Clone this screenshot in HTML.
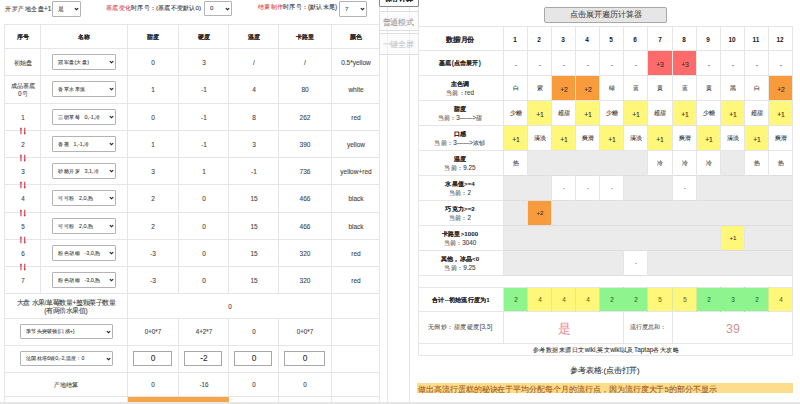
<!DOCTYPE html>
<html><head><meta charset="utf-8"><style>
html,body{margin:0;padding:0;}
body{width:800px;height:404px;overflow:hidden;position:relative;background:#fff;font-family:"Liberation Sans",sans-serif;}
.a{position:absolute;box-sizing:content-box;}
.t{position:absolute;text-align:center;white-space:nowrap;-webkit-text-stroke-width:0.35px;transform:scale(0.25);transform-origin:50% 50%;}
.tl{position:absolute;white-space:nowrap;-webkit-text-stroke-width:0.35px;transform:scale(0.25);transform-origin:0 50%;}
.sel{border:1px solid #b4b4b4;background:#fff;border-radius:1px;}
.inp{border:1px solid #a8a8a8;background:#fff;}
.mbtn{border:1px solid #dedede;background:rgba(250,250,250,0.6);}
</style></head><body>
<div class="tl" style="left:4.60px;top:-8.44px;height:33.28px;line-height:33.28px;font-size:25.6px;color:#333;">开罗产地全盘+1</div>
<div class="a sel" style="left:52px;top:1px;width:27px;height:14px;"></div>
<div class="tl" style="left:57.50px;top:-7.10px;height:31.20px;line-height:31.20px;font-size:24.0px;color:#404040;">是</div>
<svg class="a" style="left:73.7px;top:7.0px" width="5" height="4" viewBox="0 0 5 4"><polyline points="0.8,1.1 2.5,2.7 4.2,1.1" fill="none" stroke="#222" stroke-width="1.1"/></svg>
<div class="tl" style="left:105.60px;top:-8.25px;height:32.50px;line-height:32.50px;font-size:25.0px;color:#333;"><span style="color:#d9474f">基底变化</span>时序号：(基底不变默认0)</div>
<div class="a sel" style="left:204px;top:1px;width:26px;height:13px;"></div>
<div class="tl" style="left:210.00px;top:-7.60px;height:31.20px;line-height:31.20px;font-size:24.0px;color:#404040;">0</div>
<svg class="a" style="left:224.7px;top:6.5px" width="5" height="4" viewBox="0 0 5 4"><polyline points="0.8,1.1 2.5,2.7 4.2,1.1" fill="none" stroke="#222" stroke-width="1.1"/></svg>
<div class="tl" style="left:257.80px;top:-9.61px;height:33.02px;line-height:33.02px;font-size:25.4px;color:#333;"><span style="color:#d9474f">结束制作</span>时序号：(默认末尾)</div>
<div class="a sel" style="left:339px;top:1px;width:26px;height:14px;"></div>
<div class="tl" style="left:345.00px;top:-7.10px;height:31.20px;line-height:31.20px;font-size:24.0px;color:#404040;">7</div>
<svg class="a" style="left:359.7px;top:7.0px" width="5" height="4" viewBox="0 0 5 4"><polyline points="0.8,1.1 2.5,2.7 4.2,1.1" fill="none" stroke="#222" stroke-width="1.1"/></svg>
<div class="a" style="left:4px;top:24px;width:376px;height:1px;background:#e6e6e6;"></div>
<div class="a" style="left:4px;top:48px;width:376px;height:1px;background:#e6e6e6;"></div>
<div class="a" style="left:4px;top:75px;width:376px;height:1px;background:#e6e6e6;"></div>
<div class="a" style="left:4px;top:103px;width:376px;height:1px;background:#e6e6e6;"></div>
<div class="a" style="left:4px;top:130px;width:376px;height:1px;background:#e6e6e6;"></div>
<div class="a" style="left:4px;top:157px;width:376px;height:1px;background:#e6e6e6;"></div>
<div class="a" style="left:4px;top:184px;width:376px;height:1px;background:#e6e6e6;"></div>
<div class="a" style="left:4px;top:212px;width:376px;height:1px;background:#e6e6e6;"></div>
<div class="a" style="left:4px;top:239px;width:376px;height:1px;background:#e6e6e6;"></div>
<div class="a" style="left:4px;top:266px;width:376px;height:1px;background:#e6e6e6;"></div>
<div class="a" style="left:4px;top:293px;width:376px;height:1px;background:#e6e6e6;"></div>
<div class="a" style="left:4px;top:318px;width:376px;height:1px;background:#e6e6e6;"></div>
<div class="a" style="left:4px;top:345px;width:376px;height:1px;background:#e6e6e6;"></div>
<div class="a" style="left:4px;top:372px;width:376px;height:1px;background:#e6e6e6;"></div>
<div class="a" style="left:4px;top:396px;width:376px;height:1px;background:#e6e6e6;"></div>
<div class="a" style="left:4px;top:24px;width:1px;height:270px;background:#e6e6e6;"></div>
<div class="a" style="left:40px;top:24px;width:1px;height:270px;background:#e6e6e6;"></div>
<div class="a" style="left:127px;top:24px;width:1px;height:270px;background:#e6e6e6;"></div>
<div class="a" style="left:178px;top:24px;width:1px;height:270px;background:#e6e6e6;"></div>
<div class="a" style="left:228px;top:24px;width:1px;height:270px;background:#e6e6e6;"></div>
<div class="a" style="left:278px;top:24px;width:1px;height:270px;background:#e6e6e6;"></div>
<div class="a" style="left:331px;top:24px;width:1px;height:270px;background:#e6e6e6;"></div>
<div class="a" style="left:379px;top:24px;width:1px;height:270px;background:#e6e6e6;"></div>
<div class="a" style="left:4px;top:293px;width:1px;height:112px;background:#e6e6e6;"></div>
<div class="a" style="left:379px;top:293px;width:1px;height:112px;background:#e6e6e6;"></div>
<div class="a" style="left:127px;top:293px;width:1px;height:112px;background:#e6e6e6;"></div>
<div class="a" style="left:331px;top:293px;width:1px;height:112px;background:#e6e6e6;"></div>
<div class="a" style="left:178px;top:318px;width:1px;height:87px;background:#e6e6e6;"></div>
<div class="a" style="left:228px;top:318px;width:1px;height:87px;background:#e6e6e6;"></div>
<div class="a" style="left:278px;top:318px;width:1px;height:87px;background:#e6e6e6;"></div>
<div class="t" style="left:-577.50px;top:19.92px;width:1200px;height:32.76px;line-height:32.76px;font-size:25.2px;color:#222;font-weight:bold;-webkit-text-stroke-width:0.15px;">序号</div>
<div class="t" style="left:-516.00px;top:19.92px;width:1200px;height:32.76px;line-height:32.76px;font-size:25.2px;color:#222;font-weight:bold;-webkit-text-stroke-width:0.15px;">名称</div>
<div class="t" style="left:-447.00px;top:19.92px;width:1200px;height:32.76px;line-height:32.76px;font-size:25.2px;color:#222;font-weight:bold;-webkit-text-stroke-width:0.15px;">甜度</div>
<div class="t" style="left:-396.50px;top:19.92px;width:1200px;height:32.76px;line-height:32.76px;font-size:25.2px;color:#222;font-weight:bold;-webkit-text-stroke-width:0.15px;">硬度</div>
<div class="t" style="left:-346.50px;top:19.92px;width:1200px;height:32.76px;line-height:32.76px;font-size:25.2px;color:#222;font-weight:bold;-webkit-text-stroke-width:0.15px;">温度</div>
<div class="t" style="left:-295.00px;top:19.92px;width:1200px;height:32.76px;line-height:32.76px;font-size:25.2px;color:#222;font-weight:bold;-webkit-text-stroke-width:0.15px;">卡路里</div>
<div class="t" style="left:-244.50px;top:19.92px;width:1200px;height:32.76px;line-height:32.76px;font-size:25.2px;color:#222;font-weight:bold;-webkit-text-stroke-width:0.15px;">颜色</div>
<div class="t" style="left:-577.50px;top:45.92px;width:1200px;height:32.76px;line-height:32.76px;font-size:25.2px;color:#444;">初始盘</div>
<div class="a sel" style="left:52px;top:54px;width:62px;height:14px;"></div>
<div class="tl" style="left:58.00px;top:48.26px;height:28.08px;line-height:28.08px;font-size:21.6px;color:#404040;">冠军盘(大盘)</div>
<svg class="a" style="left:108.7px;top:60.0px" width="5" height="4" viewBox="0 0 5 4"><polyline points="0.8,1.1 2.5,2.7 4.2,1.1" fill="none" stroke="#222" stroke-width="1.1"/></svg>
<div class="t" style="left:-447.00px;top:45.50px;width:1200px;height:33.80px;line-height:33.80px;font-size:26.0px;color:#444;">0</div>
<div class="t" style="left:-396.50px;top:45.50px;width:1200px;height:33.80px;line-height:33.80px;font-size:26.0px;color:#444;">3</div>
<div class="t" style="left:-346.50px;top:45.50px;width:1200px;height:33.80px;line-height:33.80px;font-size:26.0px;color:#444;">/</div>
<div class="t" style="left:-295.00px;top:45.50px;width:1200px;height:33.80px;line-height:33.80px;font-size:26.0px;color:#444;">/</div>
<div class="t" style="left:-244.50px;top:45.50px;width:1200px;height:33.80px;line-height:33.80px;font-size:26.0px;color:#444;">0.5*yellow</div>
<div class="t" style="left:-577.50px;top:68.52px;width:1200px;height:32.76px;line-height:32.76px;font-size:25.2px;color:#444;">成品基底</div>
<div class="t" style="left:-577.50px;top:76.72px;width:1200px;height:32.76px;line-height:32.76px;font-size:25.2px;color:#444;">0号</div>
<div class="a sel" style="left:52px;top:81px;width:62px;height:14px;"></div>
<div class="tl" style="left:58.00px;top:75.26px;height:28.08px;line-height:28.08px;font-size:21.6px;color:#404040;">香草水果派</div>
<svg class="a" style="left:108.7px;top:87.0px" width="5" height="4" viewBox="0 0 5 4"><polyline points="0.8,1.1 2.5,2.7 4.2,1.1" fill="none" stroke="#222" stroke-width="1.1"/></svg>
<div class="t" style="left:-447.00px;top:73.00px;width:1200px;height:33.80px;line-height:33.80px;font-size:26.0px;color:#444;">1</div>
<div class="t" style="left:-396.50px;top:73.00px;width:1200px;height:33.80px;line-height:33.80px;font-size:26.0px;color:#444;">-1</div>
<div class="t" style="left:-346.50px;top:73.00px;width:1200px;height:33.80px;line-height:33.80px;font-size:26.0px;color:#444;">4</div>
<div class="t" style="left:-295.00px;top:73.00px;width:1200px;height:33.80px;line-height:33.80px;font-size:26.0px;color:#444;">80</div>
<div class="t" style="left:-244.50px;top:73.00px;width:1200px;height:33.80px;line-height:33.80px;font-size:26.0px;color:#444;">white</div>
<div class="t" style="left:-577.50px;top:100.92px;width:1200px;height:32.76px;line-height:32.76px;font-size:25.2px;color:#444;">1</div>
<div class="a sel" style="left:52px;top:109px;width:62px;height:14px;"></div>
<div class="tl" style="left:58.00px;top:103.26px;height:28.08px;line-height:28.08px;font-size:21.6px;color:#404040;">三明草莓&nbsp;&nbsp;&nbsp;0,-1,冷</div>
<svg class="a" style="left:108.7px;top:115.0px" width="5" height="4" viewBox="0 0 5 4"><polyline points="0.8,1.1 2.5,2.7 4.2,1.1" fill="none" stroke="#222" stroke-width="1.1"/></svg>
<div class="t" style="left:-447.00px;top:100.50px;width:1200px;height:33.80px;line-height:33.80px;font-size:26.0px;color:#444;">0</div>
<div class="t" style="left:-396.50px;top:100.50px;width:1200px;height:33.80px;line-height:33.80px;font-size:26.0px;color:#444;">-1</div>
<div class="t" style="left:-346.50px;top:100.50px;width:1200px;height:33.80px;line-height:33.80px;font-size:26.0px;color:#444;">8</div>
<div class="t" style="left:-295.00px;top:100.50px;width:1200px;height:33.80px;line-height:33.80px;font-size:26.0px;color:#444;">262</div>
<div class="t" style="left:-244.50px;top:100.50px;width:1200px;height:33.80px;line-height:33.80px;font-size:26.0px;color:#444;">red</div>
<svg class="a" style="left:19px;top:126.5px" width="8" height="8" viewBox="0 0 8 8"><path d="M1.9 0.3 L0.6 2.2 L1.4 2.2 L1.4 7.3 L2.5 7.3 L2.5 2.2 L3.3 2.2 Z M5.7 7.7 L4.4 5.8 L5.2 5.8 L5.2 0.7 L6.3 0.7 L6.3 5.8 L7.1 5.8 Z" fill="#c8384a"/></svg>
<div class="t" style="left:-577.50px;top:127.92px;width:1200px;height:32.76px;line-height:32.76px;font-size:25.2px;color:#444;">2</div>
<div class="a sel" style="left:52px;top:136px;width:62px;height:14px;"></div>
<div class="tl" style="left:58.00px;top:130.26px;height:28.08px;line-height:28.08px;font-size:21.6px;color:#404040;">香蕉&nbsp;&nbsp;&nbsp;1,-1,冷</div>
<svg class="a" style="left:108.7px;top:142.0px" width="5" height="4" viewBox="0 0 5 4"><polyline points="0.8,1.1 2.5,2.7 4.2,1.1" fill="none" stroke="#222" stroke-width="1.1"/></svg>
<div class="t" style="left:-447.00px;top:127.50px;width:1200px;height:33.80px;line-height:33.80px;font-size:26.0px;color:#444;">1</div>
<div class="t" style="left:-396.50px;top:127.50px;width:1200px;height:33.80px;line-height:33.80px;font-size:26.0px;color:#444;">-1</div>
<div class="t" style="left:-346.50px;top:127.50px;width:1200px;height:33.80px;line-height:33.80px;font-size:26.0px;color:#444;">3</div>
<div class="t" style="left:-295.00px;top:127.50px;width:1200px;height:33.80px;line-height:33.80px;font-size:26.0px;color:#444;">390</div>
<div class="t" style="left:-244.50px;top:127.50px;width:1200px;height:33.80px;line-height:33.80px;font-size:26.0px;color:#444;">yellow</div>
<svg class="a" style="left:19px;top:153.5px" width="8" height="8" viewBox="0 0 8 8"><path d="M1.9 0.3 L0.6 2.2 L1.4 2.2 L1.4 7.3 L2.5 7.3 L2.5 2.2 L3.3 2.2 Z M5.7 7.7 L4.4 5.8 L5.2 5.8 L5.2 0.7 L6.3 0.7 L6.3 5.8 L7.1 5.8 Z" fill="#c8384a"/></svg>
<div class="t" style="left:-577.50px;top:154.92px;width:1200px;height:32.76px;line-height:32.76px;font-size:25.2px;color:#444;">3</div>
<div class="a sel" style="left:52px;top:163px;width:62px;height:14px;"></div>
<div class="tl" style="left:58.00px;top:157.26px;height:28.08px;line-height:28.08px;font-size:21.6px;color:#404040;">砂糖开罗&nbsp;&nbsp;&nbsp;3,1,冷</div>
<svg class="a" style="left:108.7px;top:169.0px" width="5" height="4" viewBox="0 0 5 4"><polyline points="0.8,1.1 2.5,2.7 4.2,1.1" fill="none" stroke="#222" stroke-width="1.1"/></svg>
<div class="t" style="left:-447.00px;top:154.50px;width:1200px;height:33.80px;line-height:33.80px;font-size:26.0px;color:#444;">3</div>
<div class="t" style="left:-396.50px;top:154.50px;width:1200px;height:33.80px;line-height:33.80px;font-size:26.0px;color:#444;">1</div>
<div class="t" style="left:-346.50px;top:154.50px;width:1200px;height:33.80px;line-height:33.80px;font-size:26.0px;color:#444;">-1</div>
<div class="t" style="left:-295.00px;top:154.50px;width:1200px;height:33.80px;line-height:33.80px;font-size:26.0px;color:#444;">736</div>
<div class="t" style="left:-244.50px;top:154.50px;width:1200px;height:33.80px;line-height:33.80px;font-size:26.0px;color:#444;">yellow+red</div>
<svg class="a" style="left:19px;top:180.5px" width="8" height="8" viewBox="0 0 8 8"><path d="M1.9 0.3 L0.6 2.2 L1.4 2.2 L1.4 7.3 L2.5 7.3 L2.5 2.2 L3.3 2.2 Z M5.7 7.7 L4.4 5.8 L5.2 5.8 L5.2 0.7 L6.3 0.7 L6.3 5.8 L7.1 5.8 Z" fill="#c8384a"/></svg>
<div class="t" style="left:-577.50px;top:182.42px;width:1200px;height:32.76px;line-height:32.76px;font-size:25.2px;color:#444;">4</div>
<div class="a sel" style="left:52px;top:190px;width:62px;height:14px;"></div>
<div class="tl" style="left:58.00px;top:184.26px;height:28.08px;line-height:28.08px;font-size:21.6px;color:#404040;">可可粉&nbsp;&nbsp;&nbsp;2,0,热</div>
<svg class="a" style="left:108.7px;top:196.0px" width="5" height="4" viewBox="0 0 5 4"><polyline points="0.8,1.1 2.5,2.7 4.2,1.1" fill="none" stroke="#222" stroke-width="1.1"/></svg>
<div class="t" style="left:-447.00px;top:182.00px;width:1200px;height:33.80px;line-height:33.80px;font-size:26.0px;color:#444;">2</div>
<div class="t" style="left:-396.50px;top:182.00px;width:1200px;height:33.80px;line-height:33.80px;font-size:26.0px;color:#444;">0</div>
<div class="t" style="left:-346.50px;top:182.00px;width:1200px;height:33.80px;line-height:33.80px;font-size:26.0px;color:#444;">15</div>
<div class="t" style="left:-295.00px;top:182.00px;width:1200px;height:33.80px;line-height:33.80px;font-size:26.0px;color:#444;">466</div>
<div class="t" style="left:-244.50px;top:182.00px;width:1200px;height:33.80px;line-height:33.80px;font-size:26.0px;color:#444;">black</div>
<svg class="a" style="left:19px;top:208.5px" width="8" height="8" viewBox="0 0 8 8"><path d="M1.9 0.3 L0.6 2.2 L1.4 2.2 L1.4 7.3 L2.5 7.3 L2.5 2.2 L3.3 2.2 Z M5.7 7.7 L4.4 5.8 L5.2 5.8 L5.2 0.7 L6.3 0.7 L6.3 5.8 L7.1 5.8 Z" fill="#c8384a"/></svg>
<div class="t" style="left:-577.50px;top:209.92px;width:1200px;height:32.76px;line-height:32.76px;font-size:25.2px;color:#444;">5</div>
<div class="a sel" style="left:52px;top:218px;width:62px;height:14px;"></div>
<div class="tl" style="left:58.00px;top:212.26px;height:28.08px;line-height:28.08px;font-size:21.6px;color:#404040;">可可粉&nbsp;&nbsp;&nbsp;2,0,热</div>
<svg class="a" style="left:108.7px;top:224.0px" width="5" height="4" viewBox="0 0 5 4"><polyline points="0.8,1.1 2.5,2.7 4.2,1.1" fill="none" stroke="#222" stroke-width="1.1"/></svg>
<div class="t" style="left:-447.00px;top:209.50px;width:1200px;height:33.80px;line-height:33.80px;font-size:26.0px;color:#444;">2</div>
<div class="t" style="left:-396.50px;top:209.50px;width:1200px;height:33.80px;line-height:33.80px;font-size:26.0px;color:#444;">0</div>
<div class="t" style="left:-346.50px;top:209.50px;width:1200px;height:33.80px;line-height:33.80px;font-size:26.0px;color:#444;">15</div>
<div class="t" style="left:-295.00px;top:209.50px;width:1200px;height:33.80px;line-height:33.80px;font-size:26.0px;color:#444;">466</div>
<div class="t" style="left:-244.50px;top:209.50px;width:1200px;height:33.80px;line-height:33.80px;font-size:26.0px;color:#444;">black</div>
<svg class="a" style="left:19px;top:235.5px" width="8" height="8" viewBox="0 0 8 8"><path d="M1.9 0.3 L0.6 2.2 L1.4 2.2 L1.4 7.3 L2.5 7.3 L2.5 2.2 L3.3 2.2 Z M5.7 7.7 L4.4 5.8 L5.2 5.8 L5.2 0.7 L6.3 0.7 L6.3 5.8 L7.1 5.8 Z" fill="#c8384a"/></svg>
<div class="t" style="left:-577.50px;top:236.92px;width:1200px;height:32.76px;line-height:32.76px;font-size:25.2px;color:#444;">6</div>
<div class="a sel" style="left:52px;top:245px;width:62px;height:14px;"></div>
<div class="tl" style="left:58.00px;top:239.26px;height:28.08px;line-height:28.08px;font-size:21.6px;color:#404040;">粉色胡椒&nbsp;&nbsp;&nbsp;-3,0,热</div>
<svg class="a" style="left:108.7px;top:251.0px" width="5" height="4" viewBox="0 0 5 4"><polyline points="0.8,1.1 2.5,2.7 4.2,1.1" fill="none" stroke="#222" stroke-width="1.1"/></svg>
<div class="t" style="left:-447.00px;top:236.50px;width:1200px;height:33.80px;line-height:33.80px;font-size:26.0px;color:#444;">-3</div>
<div class="t" style="left:-396.50px;top:236.50px;width:1200px;height:33.80px;line-height:33.80px;font-size:26.0px;color:#444;">0</div>
<div class="t" style="left:-346.50px;top:236.50px;width:1200px;height:33.80px;line-height:33.80px;font-size:26.0px;color:#444;">15</div>
<div class="t" style="left:-295.00px;top:236.50px;width:1200px;height:33.80px;line-height:33.80px;font-size:26.0px;color:#444;">320</div>
<div class="t" style="left:-244.50px;top:236.50px;width:1200px;height:33.80px;line-height:33.80px;font-size:26.0px;color:#444;">red</div>
<svg class="a" style="left:19px;top:262.5px" width="8" height="8" viewBox="0 0 8 8"><path d="M1.9 0.3 L0.6 2.2 L1.4 2.2 L1.4 7.3 L2.5 7.3 L2.5 2.2 L3.3 2.2 Z M5.7 7.7 L4.4 5.8 L5.2 5.8 L5.2 0.7 L6.3 0.7 L6.3 5.8 L7.1 5.8 Z" fill="#c8384a"/></svg>
<div class="t" style="left:-577.50px;top:263.92px;width:1200px;height:32.76px;line-height:32.76px;font-size:25.2px;color:#444;">7</div>
<div class="a sel" style="left:52px;top:272px;width:62px;height:14px;"></div>
<div class="tl" style="left:58.00px;top:266.26px;height:28.08px;line-height:28.08px;font-size:21.6px;color:#404040;">粉色胡椒&nbsp;&nbsp;&nbsp;-3,0,热</div>
<svg class="a" style="left:108.7px;top:278.0px" width="5" height="4" viewBox="0 0 5 4"><polyline points="0.8,1.1 2.5,2.7 4.2,1.1" fill="none" stroke="#222" stroke-width="1.1"/></svg>
<div class="t" style="left:-447.00px;top:263.50px;width:1200px;height:33.80px;line-height:33.80px;font-size:26.0px;color:#444;">-3</div>
<div class="t" style="left:-396.50px;top:263.50px;width:1200px;height:33.80px;line-height:33.80px;font-size:26.0px;color:#444;">0</div>
<div class="t" style="left:-346.50px;top:263.50px;width:1200px;height:33.80px;line-height:33.80px;font-size:26.0px;color:#444;">15</div>
<div class="t" style="left:-295.00px;top:263.50px;width:1200px;height:33.80px;line-height:33.80px;font-size:26.0px;color:#444;">320</div>
<div class="t" style="left:-244.50px;top:263.50px;width:1200px;height:33.80px;line-height:33.80px;font-size:26.0px;color:#444;">red</div>
<div class="t" style="left:-534.00px;top:285.60px;width:1200px;height:33.80px;line-height:33.80px;font-size:26.0px;color:#444;">大盘 水果/草莓数量+整颗栗子数量</div>
<div class="t" style="left:-534.00px;top:293.60px;width:1200px;height:33.80px;line-height:33.80px;font-size:26.0px;color:#444;">(有两倍水果值)</div>
<div class="t" style="left:-370.50px;top:289.62px;width:1200px;height:32.76px;line-height:32.76px;font-size:25.2px;color:#444;">0</div>
<div class="a sel" style="left:20px;top:324px;width:91px;height:13px;"></div>
<div class="tl" style="left:25.70px;top:317.22px;height:27.56px;line-height:27.56px;font-size:21.2px;color:#404040;">季节头突破顿(口感+)</div>
<svg class="a" style="left:105.7px;top:329.5px" width="5" height="4" viewBox="0 0 5 4"><polyline points="0.8,1.1 2.5,2.7 4.2,1.1" fill="none" stroke="#222" stroke-width="1.1"/></svg>
<div class="t" style="left:-447.00px;top:315.12px;width:1200px;height:32.76px;line-height:32.76px;font-size:25.2px;color:#444;">0+0*7</div>
<div class="t" style="left:-396.50px;top:315.12px;width:1200px;height:32.76px;line-height:32.76px;font-size:25.2px;color:#444;">4+2*7</div>
<div class="t" style="left:-346.50px;top:315.12px;width:1200px;height:32.76px;line-height:32.76px;font-size:25.2px;color:#444;">0</div>
<div class="t" style="left:-295.00px;top:315.12px;width:1200px;height:32.76px;line-height:32.76px;font-size:25.2px;color:#444;">0+0*7</div>
<div class="a sel" style="left:20px;top:351px;width:91px;height:13px;"></div>
<div class="tl" style="left:25.70px;top:344.22px;height:27.56px;line-height:27.56px;font-size:21.2px;color:#404040;">法国枕塔6级0,-2,温度：0</div>
<svg class="a" style="left:105.7px;top:356.5px" width="5" height="4" viewBox="0 0 5 4"><polyline points="0.8,1.1 2.5,2.7 4.2,1.1" fill="none" stroke="#222" stroke-width="1.1"/></svg>
<div class="a inp" style="left:133px;top:351px;width:37px;height:13px;"></div>
<div class="t" style="left:-447.00px;top:336.72px;width:1200px;height:43.16px;line-height:43.16px;font-size:33.2px;color:#2a2a2a;">0</div>
<div class="a inp" style="left:184px;top:351px;width:36px;height:13px;"></div>
<div class="t" style="left:-396.50px;top:336.72px;width:1200px;height:43.16px;line-height:43.16px;font-size:33.2px;color:#2a2a2a;">-2</div>
<div class="a inp" style="left:234px;top:351px;width:36px;height:13px;"></div>
<div class="t" style="left:-346.50px;top:336.72px;width:1200px;height:43.16px;line-height:43.16px;font-size:33.2px;color:#2a2a2a;">0</div>
<div class="a inp" style="left:284px;top:351px;width:39px;height:13px;"></div>
<div class="t" style="left:-295.00px;top:336.72px;width:1200px;height:43.16px;line-height:43.16px;font-size:33.2px;color:#2a2a2a;">0</div>
<div class="t" style="left:-534.00px;top:367.62px;width:1200px;height:32.76px;line-height:32.76px;font-size:25.2px;color:#444;">产地结算</div>
<div class="t" style="left:-447.00px;top:367.62px;width:1200px;height:32.76px;line-height:32.76px;font-size:25.2px;color:#444;">0</div>
<div class="t" style="left:-396.50px;top:367.62px;width:1200px;height:32.76px;line-height:32.76px;font-size:25.2px;color:#444;">-16</div>
<div class="t" style="left:-346.50px;top:367.62px;width:1200px;height:32.76px;line-height:32.76px;font-size:25.2px;color:#444;">0</div>
<div class="t" style="left:-295.00px;top:367.62px;width:1200px;height:32.76px;line-height:32.76px;font-size:25.2px;color:#444;">0</div>
<div class="a" style="left:128px;top:397px;width:101px;height:6px;background:#f6a548;"></div>
<div class="a" style="left:387px;top:0px;width:1px;height:405px;background:#e6e6e6;"></div>
<div class="a" style="left:409px;top:0px;width:1px;height:405px;background:#e6e6e6;"></div>
<div class="a" style="left:379px;top:0px;width:1px;height:405px;background:#e6e6e6;"></div>
<div class="a" style="left:418px;top:0px;width:1px;height:356px;background:#e6e6e6;"></div>
<div class="a" style="left:379px;top:-12px;width:38px;height:17px;border:1px solid #888;background:#fff;border-radius:1px"></div>
<div class="t" style="left:-201.50px;top:-20.48px;width:1200px;height:37.96px;line-height:37.96px;font-size:29.2px;color:#222;"><b>保存计算</b></div>
<div class="a mbtn" style="left:379px;top:11px;width:38px;height:18px;"></div>
<div class="t" style="left:-202.00px;top:2.22px;width:1200px;height:40.56px;line-height:40.56px;font-size:31.2px;color:#999;">普通模式</div>
<div class="a mbtn" style="left:379px;top:33px;width:38px;height:20px;"></div>
<div class="t" style="left:-202.00px;top:24.22px;width:1200px;height:40.56px;line-height:40.56px;font-size:31.2px;color:#c8c8c8;">一键全屏</div>
<div class="a" style="left:544px;top:7px;width:121px;height:14px;border:1px solid #a8a8a8;background:#e6e6e6;border-radius:2px"></div>
<div class="t" style="left:5.50px;top:-5.70px;width:1200px;height:41.60px;line-height:41.60px;font-size:32.0px;color:#484848;">点击展开遍历计算器</div>
<div class="a" style="left:648px;top:51px;width:48px;height:24px;background:#ff6b6b;"></div>
<div class="a" style="left:552px;top:76px;width:23px;height:24px;background:#f89b3c;"></div>
<div class="a" style="left:576px;top:76px;width:23px;height:24px;background:#f89b3c;"></div>
<div class="a" style="left:769px;top:76px;width:23px;height:24px;background:#f89b3c;"></div>
<div class="a" style="left:528px;top:101px;width:23px;height:24px;background:#fff77a;"></div>
<div class="a" style="left:576px;top:101px;width:23px;height:24px;background:#fff77a;"></div>
<div class="a" style="left:624px;top:101px;width:23px;height:24px;background:#fff77a;"></div>
<div class="a" style="left:673px;top:101px;width:23px;height:24px;background:#fff77a;"></div>
<div class="a" style="left:721px;top:101px;width:23px;height:24px;background:#fff77a;"></div>
<div class="a" style="left:769px;top:101px;width:23px;height:24px;background:#fff77a;"></div>
<div class="a" style="left:504px;top:126px;width:23px;height:24px;background:#fff77a;"></div>
<div class="a" style="left:552px;top:126px;width:23px;height:24px;background:#fff77a;"></div>
<div class="a" style="left:600px;top:126px;width:23px;height:24px;background:#fff77a;"></div>
<div class="a" style="left:648px;top:126px;width:24px;height:24px;background:#fff77a;"></div>
<div class="a" style="left:697px;top:126px;width:23px;height:24px;background:#fff77a;"></div>
<div class="a" style="left:745px;top:126px;width:23px;height:24px;background:#fff77a;"></div>
<div class="a" style="left:528px;top:151px;width:119px;height:24px;background:#ebebeb;"></div>
<div class="a" style="left:721px;top:151px;width:23px;height:24px;background:#ebebeb;"></div>
<div class="a" style="left:504px;top:176px;width:47px;height:24px;background:#ebebeb;"></div>
<div class="a" style="left:624px;top:176px;width:48px;height:24px;background:#ebebeb;"></div>
<div class="a" style="left:697px;top:176px;width:95px;height:24px;background:#ebebeb;"></div>
<div class="a" style="left:504px;top:201px;width:23px;height:24px;background:#ebebeb;"></div>
<div class="a" style="left:528px;top:201px;width:23px;height:24px;background:#f89b3c;"></div>
<div class="a" style="left:552px;top:201px;width:240px;height:24px;background:#ebebeb;"></div>
<div class="a" style="left:504px;top:226px;width:216px;height:24px;background:#ebebeb;"></div>
<div class="a" style="left:721px;top:226px;width:23px;height:24px;background:#fff77a;"></div>
<div class="a" style="left:745px;top:226px;width:47px;height:24px;background:#ebebeb;"></div>
<div class="a" style="left:504px;top:251px;width:119px;height:24px;background:#ebebeb;"></div>
<div class="a" style="left:648px;top:251px;width:144px;height:24px;background:#ebebeb;"></div>
<div class="a" style="left:504px;top:288px;width:23px;height:23px;background:#8ef58e;"></div>
<div class="a" style="left:528px;top:288px;width:23px;height:23px;background:#fff77a;"></div>
<div class="a" style="left:552px;top:288px;width:23px;height:23px;background:#fff77a;"></div>
<div class="a" style="left:576px;top:288px;width:23px;height:23px;background:#fff77a;"></div>
<div class="a" style="left:600px;top:288px;width:23px;height:23px;background:#8ef58e;"></div>
<div class="a" style="left:624px;top:288px;width:23px;height:23px;background:#8ef58e;"></div>
<div class="a" style="left:648px;top:288px;width:24px;height:23px;background:#fff77a;"></div>
<div class="a" style="left:673px;top:288px;width:23px;height:23px;background:#fff77a;"></div>
<div class="a" style="left:697px;top:288px;width:23px;height:23px;background:#8ef58e;"></div>
<div class="a" style="left:721px;top:288px;width:23px;height:23px;background:#8ef58e;"></div>
<div class="a" style="left:745px;top:288px;width:23px;height:23px;background:#8ef58e;"></div>
<div class="a" style="left:769px;top:288px;width:23px;height:23px;background:#fff77a;"></div>
<div class="a" style="left:418px;top:26px;width:375px;height:1px;background:#e6e6e6;"></div>
<div class="a" style="left:418px;top:50px;width:375px;height:1px;background:#e6e6e6;"></div>
<div class="a" style="left:418px;top:75px;width:375px;height:1px;background:#e6e6e6;"></div>
<div class="a" style="left:418px;top:100px;width:375px;height:1px;background:#e6e6e6;"></div>
<div class="a" style="left:418px;top:125px;width:375px;height:1px;background:#e6e6e6;"></div>
<div class="a" style="left:418px;top:150px;width:375px;height:1px;background:#e6e6e6;"></div>
<div class="a" style="left:418px;top:175px;width:86px;height:1px;background:#e6e6e6;"></div>
<div class="a" style="left:503px;top:175px;width:290px;height:1px;background:#dedede;"></div>
<div class="a" style="left:418px;top:200px;width:86px;height:1px;background:#e6e6e6;"></div>
<div class="a" style="left:503px;top:200px;width:290px;height:1px;background:#dedede;"></div>
<div class="a" style="left:418px;top:225px;width:86px;height:1px;background:#e6e6e6;"></div>
<div class="a" style="left:503px;top:225px;width:290px;height:1px;background:#dedede;"></div>
<div class="a" style="left:418px;top:250px;width:86px;height:1px;background:#e6e6e6;"></div>
<div class="a" style="left:503px;top:250px;width:290px;height:1px;background:#dedede;"></div>
<div class="a" style="left:418px;top:275px;width:86px;height:1px;background:#e6e6e6;"></div>
<div class="a" style="left:503px;top:275px;width:290px;height:1px;background:#dedede;"></div>
<div class="a" style="left:418px;top:287px;width:375px;height:1px;background:#e6e6e6;"></div>
<div class="a" style="left:418px;top:311px;width:375px;height:1px;background:#e6e6e6;"></div>
<div class="a" style="left:418px;top:343px;width:375px;height:1px;background:#e6e6e6;"></div>
<div class="a" style="left:418px;top:355px;width:375px;height:1px;background:#e6e6e6;"></div>
<div class="a" style="left:418px;top:26px;width:1px;height:330px;background:#e6e6e6;"></div>
<div class="a" style="left:792px;top:26px;width:1px;height:330px;background:#e6e6e6;"></div>
<div class="a" style="left:503px;top:26px;width:1px;height:250px;background:#e6e6e6;"></div>
<div class="a" style="left:503px;top:287px;width:1px;height:57px;background:#e6e6e6;"></div>
<div class="a" style="left:527px;top:26px;width:1px;height:25px;background:#e6e6e6;"></div>
<div class="a" style="left:551px;top:26px;width:1px;height:25px;background:#e6e6e6;"></div>
<div class="a" style="left:575px;top:26px;width:1px;height:25px;background:#e6e6e6;"></div>
<div class="a" style="left:599px;top:26px;width:1px;height:25px;background:#e6e6e6;"></div>
<div class="a" style="left:623px;top:26px;width:1px;height:25px;background:#e6e6e6;"></div>
<div class="a" style="left:647px;top:26px;width:1px;height:25px;background:#e6e6e6;"></div>
<div class="a" style="left:672px;top:26px;width:1px;height:25px;background:#e6e6e6;"></div>
<div class="a" style="left:696px;top:26px;width:1px;height:25px;background:#e6e6e6;"></div>
<div class="a" style="left:720px;top:26px;width:1px;height:25px;background:#e6e6e6;"></div>
<div class="a" style="left:744px;top:26px;width:1px;height:25px;background:#e6e6e6;"></div>
<div class="a" style="left:768px;top:26px;width:1px;height:25px;background:#e6e6e6;"></div>
<div class="a" style="left:527px;top:50px;width:1px;height:26px;background:#e6e6e6;"></div>
<div class="a" style="left:551px;top:50px;width:1px;height:26px;background:#e6e6e6;"></div>
<div class="a" style="left:575px;top:50px;width:1px;height:26px;background:#e6e6e6;"></div>
<div class="a" style="left:599px;top:50px;width:1px;height:26px;background:#e6e6e6;"></div>
<div class="a" style="left:623px;top:50px;width:1px;height:26px;background:#e6e6e6;"></div>
<div class="a" style="left:647px;top:50px;width:1px;height:26px;background:#e6e6e6;"></div>
<div class="a" style="left:672px;top:50px;width:1px;height:26px;background:#e6e6e6;"></div>
<div class="a" style="left:696px;top:50px;width:1px;height:26px;background:#e6e6e6;"></div>
<div class="a" style="left:720px;top:50px;width:1px;height:26px;background:#e6e6e6;"></div>
<div class="a" style="left:744px;top:50px;width:1px;height:26px;background:#e6e6e6;"></div>
<div class="a" style="left:768px;top:50px;width:1px;height:26px;background:#e6e6e6;"></div>
<div class="a" style="left:527px;top:75px;width:1px;height:26px;background:#e6e6e6;"></div>
<div class="a" style="left:551px;top:75px;width:1px;height:26px;background:#e6e6e6;"></div>
<div class="a" style="left:575px;top:75px;width:1px;height:26px;background:#e6e6e6;"></div>
<div class="a" style="left:599px;top:75px;width:1px;height:26px;background:#e6e6e6;"></div>
<div class="a" style="left:623px;top:75px;width:1px;height:26px;background:#e6e6e6;"></div>
<div class="a" style="left:647px;top:75px;width:1px;height:26px;background:#e6e6e6;"></div>
<div class="a" style="left:672px;top:75px;width:1px;height:26px;background:#e6e6e6;"></div>
<div class="a" style="left:696px;top:75px;width:1px;height:26px;background:#e6e6e6;"></div>
<div class="a" style="left:720px;top:75px;width:1px;height:26px;background:#e6e6e6;"></div>
<div class="a" style="left:744px;top:75px;width:1px;height:26px;background:#e6e6e6;"></div>
<div class="a" style="left:768px;top:75px;width:1px;height:26px;background:#e6e6e6;"></div>
<div class="a" style="left:527px;top:100px;width:1px;height:26px;background:#e6e6e6;"></div>
<div class="a" style="left:551px;top:100px;width:1px;height:26px;background:#e6e6e6;"></div>
<div class="a" style="left:575px;top:100px;width:1px;height:26px;background:#e6e6e6;"></div>
<div class="a" style="left:599px;top:100px;width:1px;height:26px;background:#e6e6e6;"></div>
<div class="a" style="left:623px;top:100px;width:1px;height:26px;background:#e6e6e6;"></div>
<div class="a" style="left:647px;top:100px;width:1px;height:26px;background:#e6e6e6;"></div>
<div class="a" style="left:672px;top:100px;width:1px;height:26px;background:#e6e6e6;"></div>
<div class="a" style="left:696px;top:100px;width:1px;height:26px;background:#e6e6e6;"></div>
<div class="a" style="left:720px;top:100px;width:1px;height:26px;background:#e6e6e6;"></div>
<div class="a" style="left:744px;top:100px;width:1px;height:26px;background:#e6e6e6;"></div>
<div class="a" style="left:768px;top:100px;width:1px;height:26px;background:#e6e6e6;"></div>
<div class="a" style="left:527px;top:125px;width:1px;height:26px;background:#e6e6e6;"></div>
<div class="a" style="left:551px;top:125px;width:1px;height:26px;background:#e6e6e6;"></div>
<div class="a" style="left:575px;top:125px;width:1px;height:26px;background:#e6e6e6;"></div>
<div class="a" style="left:599px;top:125px;width:1px;height:26px;background:#e6e6e6;"></div>
<div class="a" style="left:623px;top:125px;width:1px;height:26px;background:#e6e6e6;"></div>
<div class="a" style="left:647px;top:125px;width:1px;height:26px;background:#e6e6e6;"></div>
<div class="a" style="left:672px;top:125px;width:1px;height:26px;background:#e6e6e6;"></div>
<div class="a" style="left:696px;top:125px;width:1px;height:26px;background:#e6e6e6;"></div>
<div class="a" style="left:720px;top:125px;width:1px;height:26px;background:#e6e6e6;"></div>
<div class="a" style="left:744px;top:125px;width:1px;height:26px;background:#e6e6e6;"></div>
<div class="a" style="left:768px;top:125px;width:1px;height:26px;background:#e6e6e6;"></div>
<div class="a" style="left:527px;top:150px;width:1px;height:26px;background:#e6e6e6;"></div>
<div class="a" style="left:647px;top:150px;width:1px;height:26px;background:#e6e6e6;"></div>
<div class="a" style="left:672px;top:150px;width:1px;height:26px;background:#e6e6e6;"></div>
<div class="a" style="left:696px;top:150px;width:1px;height:26px;background:#e6e6e6;"></div>
<div class="a" style="left:720px;top:150px;width:1px;height:26px;background:#e6e6e6;"></div>
<div class="a" style="left:744px;top:150px;width:1px;height:26px;background:#e6e6e6;"></div>
<div class="a" style="left:768px;top:150px;width:1px;height:26px;background:#e6e6e6;"></div>
<div class="a" style="left:551px;top:175px;width:1px;height:26px;background:#e6e6e6;"></div>
<div class="a" style="left:575px;top:175px;width:1px;height:26px;background:#e6e6e6;"></div>
<div class="a" style="left:599px;top:175px;width:1px;height:26px;background:#e6e6e6;"></div>
<div class="a" style="left:623px;top:175px;width:1px;height:26px;background:#e6e6e6;"></div>
<div class="a" style="left:672px;top:175px;width:1px;height:26px;background:#e6e6e6;"></div>
<div class="a" style="left:696px;top:175px;width:1px;height:26px;background:#e6e6e6;"></div>
<div class="a" style="left:527px;top:200px;width:1px;height:26px;background:#e6e6e6;"></div>
<div class="a" style="left:551px;top:200px;width:1px;height:26px;background:#e6e6e6;"></div>
<div class="a" style="left:720px;top:225px;width:1px;height:26px;background:#e6e6e6;"></div>
<div class="a" style="left:744px;top:225px;width:1px;height:26px;background:#e6e6e6;"></div>
<div class="a" style="left:623px;top:250px;width:1px;height:26px;background:#e6e6e6;"></div>
<div class="a" style="left:647px;top:250px;width:1px;height:26px;background:#e6e6e6;"></div>
<div class="a" style="left:527px;top:287px;width:1px;height:25px;background:#d8e890;"></div>
<div class="a" style="left:551px;top:287px;width:1px;height:25px;background:#e0e8a0;"></div>
<div class="a" style="left:575px;top:287px;width:1px;height:25px;background:#e0e8a0;"></div>
<div class="a" style="left:599px;top:287px;width:1px;height:25px;background:#d8e890;"></div>
<div class="a" style="left:623px;top:287px;width:1px;height:25px;background:#8ef58e;"></div>
<div class="a" style="left:647px;top:287px;width:1px;height:25px;background:#d8e890;"></div>
<div class="a" style="left:672px;top:287px;width:1px;height:25px;background:#e0e8a0;"></div>
<div class="a" style="left:696px;top:287px;width:1px;height:25px;background:#d8e890;"></div>
<div class="a" style="left:720px;top:287px;width:1px;height:25px;background:#8ef58e;"></div>
<div class="a" style="left:744px;top:287px;width:1px;height:25px;background:#8ef58e;"></div>
<div class="a" style="left:768px;top:287px;width:1px;height:25px;background:#d8e890;"></div>
<div class="a" style="left:623px;top:311px;width:1px;height:33px;background:#e6e6e6;"></div>
<div class="a" style="left:672px;top:311px;width:1px;height:33px;background:#e6e6e6;"></div>
<div class="t" style="left:-140.20px;top:22.80px;width:1200px;height:33.80px;line-height:33.80px;font-size:26.0px;color:#222;font-weight:bold;-webkit-text-stroke-width:0.15px;">数据/月份</div>
<div class="t" style="left:-85.00px;top:22.86px;width:1200px;height:33.28px;line-height:33.28px;font-size:25.6px;color:#222;font-weight:bold;-webkit-text-stroke-width:0.15px;">1</div>
<div class="t" style="left:-61.00px;top:22.86px;width:1200px;height:33.28px;line-height:33.28px;font-size:25.6px;color:#222;font-weight:bold;-webkit-text-stroke-width:0.15px;">2</div>
<div class="t" style="left:-37.00px;top:22.86px;width:1200px;height:33.28px;line-height:33.28px;font-size:25.6px;color:#222;font-weight:bold;-webkit-text-stroke-width:0.15px;">3</div>
<div class="t" style="left:-13.00px;top:22.86px;width:1200px;height:33.28px;line-height:33.28px;font-size:25.6px;color:#222;font-weight:bold;-webkit-text-stroke-width:0.15px;">4</div>
<div class="t" style="left:11.00px;top:22.86px;width:1200px;height:33.28px;line-height:33.28px;font-size:25.6px;color:#222;font-weight:bold;-webkit-text-stroke-width:0.15px;">5</div>
<div class="t" style="left:35.00px;top:22.86px;width:1200px;height:33.28px;line-height:33.28px;font-size:25.6px;color:#222;font-weight:bold;-webkit-text-stroke-width:0.15px;">6</div>
<div class="t" style="left:59.50px;top:22.86px;width:1200px;height:33.28px;line-height:33.28px;font-size:25.6px;color:#222;font-weight:bold;-webkit-text-stroke-width:0.15px;">7</div>
<div class="t" style="left:84.00px;top:22.86px;width:1200px;height:33.28px;line-height:33.28px;font-size:25.6px;color:#222;font-weight:bold;-webkit-text-stroke-width:0.15px;">8</div>
<div class="t" style="left:108.00px;top:22.86px;width:1200px;height:33.28px;line-height:33.28px;font-size:25.6px;color:#222;font-weight:bold;-webkit-text-stroke-width:0.15px;">9</div>
<div class="t" style="left:132.00px;top:22.86px;width:1200px;height:33.28px;line-height:33.28px;font-size:25.6px;color:#222;font-weight:bold;-webkit-text-stroke-width:0.15px;">10</div>
<div class="t" style="left:156.00px;top:22.86px;width:1200px;height:33.28px;line-height:33.28px;font-size:25.6px;color:#222;font-weight:bold;-webkit-text-stroke-width:0.15px;">11</div>
<div class="t" style="left:180.00px;top:22.86px;width:1200px;height:33.28px;line-height:33.28px;font-size:25.6px;color:#222;font-weight:bold;-webkit-text-stroke-width:0.15px;">12</div>
<div class="t" style="left:-140.20px;top:46.12px;width:1200px;height:32.76px;line-height:32.76px;font-size:25.2px;color:#222;font-weight:bold;-webkit-text-stroke-width:0.15px;">基底(点击展开)</div>
<div class="t" style="left:-139.80px;top:67.98px;width:1200px;height:32.24px;line-height:32.24px;font-size:24.8px;color:#222;font-weight:bold;-webkit-text-stroke-width:0.15px;">主色调</div>
<div class="t" style="left:-139.80px;top:76.12px;width:1200px;height:32.76px;line-height:32.76px;font-size:25.2px;color:#444;">当前：red</div>
<div class="t" style="left:-139.80px;top:92.98px;width:1200px;height:32.24px;line-height:32.24px;font-size:24.8px;color:#222;font-weight:bold;-webkit-text-stroke-width:0.15px;">甜度</div>
<div class="t" style="left:-139.80px;top:101.12px;width:1200px;height:32.76px;line-height:32.76px;font-size:25.2px;color:#444;">当前：3——&gt;甜</div>
<div class="t" style="left:-139.80px;top:117.98px;width:1200px;height:32.24px;line-height:32.24px;font-size:24.8px;color:#222;font-weight:bold;-webkit-text-stroke-width:0.15px;">口感</div>
<div class="t" style="left:-139.80px;top:126.12px;width:1200px;height:32.76px;line-height:32.76px;font-size:25.2px;color:#444;">当前：3——&gt;浓郁</div>
<div class="t" style="left:-139.80px;top:142.98px;width:1200px;height:32.24px;line-height:32.24px;font-size:24.8px;color:#222;font-weight:bold;-webkit-text-stroke-width:0.15px;">温度</div>
<div class="t" style="left:-139.80px;top:151.12px;width:1200px;height:32.76px;line-height:32.76px;font-size:25.2px;color:#444;">当前：9.25</div>
<div class="t" style="left:-139.80px;top:167.98px;width:1200px;height:32.24px;line-height:32.24px;font-size:24.8px;color:#222;font-weight:bold;-webkit-text-stroke-width:0.15px;">水果值&gt;=4</div>
<div class="t" style="left:-139.80px;top:176.12px;width:1200px;height:32.76px;line-height:32.76px;font-size:25.2px;color:#444;">当前：2</div>
<div class="t" style="left:-139.80px;top:192.98px;width:1200px;height:32.24px;line-height:32.24px;font-size:24.8px;color:#222;font-weight:bold;-webkit-text-stroke-width:0.15px;">巧克力&gt;=2</div>
<div class="t" style="left:-139.80px;top:201.12px;width:1200px;height:32.76px;line-height:32.76px;font-size:25.2px;color:#444;">当前：2</div>
<div class="t" style="left:-139.80px;top:217.98px;width:1200px;height:32.24px;line-height:32.24px;font-size:24.8px;color:#222;font-weight:bold;-webkit-text-stroke-width:0.15px;">卡路里&gt;1000</div>
<div class="t" style="left:-139.80px;top:226.12px;width:1200px;height:32.76px;line-height:32.76px;font-size:25.2px;color:#444;">当前：3040</div>
<div class="t" style="left:-139.80px;top:242.98px;width:1200px;height:32.24px;line-height:32.24px;font-size:24.8px;color:#222;font-weight:bold;-webkit-text-stroke-width:0.15px;">其他，冰品&lt;0</div>
<div class="t" style="left:-139.80px;top:251.12px;width:1200px;height:32.76px;line-height:32.76px;font-size:25.2px;color:#444;">当前：9.25</div>
<div class="t" style="left:-139.50px;top:284.38px;width:1200px;height:32.24px;line-height:32.24px;font-size:24.8px;color:#222;font-weight:bold;-webkit-text-stroke-width:0.15px;">合计--初始流行度为1</div>
<div class="t" style="left:-140.50px;top:310.06px;width:1200px;height:33.28px;line-height:33.28px;font-size:25.6px;color:#555;">无倒炒：甜度硬度[3,5]</div>
<div class="t" style="left:-84.50px;top:46.52px;width:1200px;height:35.36px;line-height:35.36px;font-size:27.2px;color:#333;">-</div>
<div class="t" style="left:-60.50px;top:46.52px;width:1200px;height:35.36px;line-height:35.36px;font-size:27.2px;color:#333;">-</div>
<div class="t" style="left:-36.50px;top:46.52px;width:1200px;height:35.36px;line-height:35.36px;font-size:27.2px;color:#333;">-</div>
<div class="t" style="left:-12.50px;top:46.52px;width:1200px;height:35.36px;line-height:35.36px;font-size:27.2px;color:#333;">-</div>
<div class="t" style="left:11.50px;top:46.52px;width:1200px;height:35.36px;line-height:35.36px;font-size:27.2px;color:#333;">-</div>
<div class="t" style="left:35.50px;top:46.52px;width:1200px;height:35.36px;line-height:35.36px;font-size:27.2px;color:#333;">-</div>
<div class="t" style="left:60.00px;top:46.52px;width:1200px;height:35.36px;line-height:35.36px;font-size:27.2px;color:#333;">+3</div>
<div class="t" style="left:84.50px;top:46.52px;width:1200px;height:35.36px;line-height:35.36px;font-size:27.2px;color:#333;">+3</div>
<div class="t" style="left:108.50px;top:46.52px;width:1200px;height:35.36px;line-height:35.36px;font-size:27.2px;color:#333;">-</div>
<div class="t" style="left:132.50px;top:46.52px;width:1200px;height:35.36px;line-height:35.36px;font-size:27.2px;color:#333;">-</div>
<div class="t" style="left:156.50px;top:46.52px;width:1200px;height:35.36px;line-height:35.36px;font-size:27.2px;color:#333;">-</div>
<div class="t" style="left:180.50px;top:46.52px;width:1200px;height:35.36px;line-height:35.36px;font-size:27.2px;color:#333;">-</div>
<div class="t" style="left:-84.50px;top:72.44px;width:1200px;height:31.72px;line-height:31.72px;font-size:24.4px;color:#333;">白</div>
<div class="t" style="left:-60.50px;top:72.44px;width:1200px;height:31.72px;line-height:31.72px;font-size:24.4px;color:#333;">紫</div>
<div class="t" style="left:-36.50px;top:71.52px;width:1200px;height:35.36px;line-height:35.36px;font-size:27.2px;color:#333;">+2</div>
<div class="t" style="left:-12.50px;top:71.52px;width:1200px;height:35.36px;line-height:35.36px;font-size:27.2px;color:#333;">+2</div>
<div class="t" style="left:11.50px;top:72.44px;width:1200px;height:31.72px;line-height:31.72px;font-size:24.4px;color:#333;">绿</div>
<div class="t" style="left:35.50px;top:72.44px;width:1200px;height:31.72px;line-height:31.72px;font-size:24.4px;color:#333;">蓝</div>
<div class="t" style="left:60.00px;top:72.44px;width:1200px;height:31.72px;line-height:31.72px;font-size:24.4px;color:#333;">黄</div>
<div class="t" style="left:84.50px;top:72.44px;width:1200px;height:31.72px;line-height:31.72px;font-size:24.4px;color:#333;">蓝</div>
<div class="t" style="left:108.50px;top:72.44px;width:1200px;height:31.72px;line-height:31.72px;font-size:24.4px;color:#333;">黄</div>
<div class="t" style="left:132.50px;top:72.44px;width:1200px;height:31.72px;line-height:31.72px;font-size:24.4px;color:#333;">黑</div>
<div class="t" style="left:156.50px;top:72.44px;width:1200px;height:31.72px;line-height:31.72px;font-size:24.4px;color:#333;">白</div>
<div class="t" style="left:180.50px;top:71.52px;width:1200px;height:35.36px;line-height:35.36px;font-size:27.2px;color:#333;">+2</div>
<div class="t" style="left:-84.50px;top:97.44px;width:1200px;height:31.72px;line-height:31.72px;font-size:24.4px;color:#333;">少糖</div>
<div class="t" style="left:-60.50px;top:96.52px;width:1200px;height:35.36px;line-height:35.36px;font-size:27.2px;color:#333;">+1</div>
<div class="t" style="left:-36.50px;top:97.44px;width:1200px;height:31.72px;line-height:31.72px;font-size:24.4px;color:#333;">超甜</div>
<div class="t" style="left:-12.50px;top:96.52px;width:1200px;height:35.36px;line-height:35.36px;font-size:27.2px;color:#333;">+1</div>
<div class="t" style="left:11.50px;top:97.44px;width:1200px;height:31.72px;line-height:31.72px;font-size:24.4px;color:#333;">少糖</div>
<div class="t" style="left:35.50px;top:96.52px;width:1200px;height:35.36px;line-height:35.36px;font-size:27.2px;color:#333;">+1</div>
<div class="t" style="left:60.00px;top:97.44px;width:1200px;height:31.72px;line-height:31.72px;font-size:24.4px;color:#333;">超甜</div>
<div class="t" style="left:84.50px;top:96.52px;width:1200px;height:35.36px;line-height:35.36px;font-size:27.2px;color:#333;">+1</div>
<div class="t" style="left:108.50px;top:97.44px;width:1200px;height:31.72px;line-height:31.72px;font-size:24.4px;color:#333;">少糖</div>
<div class="t" style="left:132.50px;top:96.52px;width:1200px;height:35.36px;line-height:35.36px;font-size:27.2px;color:#333;">+1</div>
<div class="t" style="left:156.50px;top:97.44px;width:1200px;height:31.72px;line-height:31.72px;font-size:24.4px;color:#333;">超甜</div>
<div class="t" style="left:180.50px;top:96.52px;width:1200px;height:35.36px;line-height:35.36px;font-size:27.2px;color:#333;">+1</div>
<div class="t" style="left:-84.50px;top:121.52px;width:1200px;height:35.36px;line-height:35.36px;font-size:27.2px;color:#333;">+1</div>
<div class="t" style="left:-60.50px;top:122.44px;width:1200px;height:31.72px;line-height:31.72px;font-size:24.4px;color:#333;">清淡</div>
<div class="t" style="left:-36.50px;top:121.52px;width:1200px;height:35.36px;line-height:35.36px;font-size:27.2px;color:#333;">+1</div>
<div class="t" style="left:-12.50px;top:122.44px;width:1200px;height:31.72px;line-height:31.72px;font-size:24.4px;color:#333;">爽滑</div>
<div class="t" style="left:11.50px;top:121.52px;width:1200px;height:35.36px;line-height:35.36px;font-size:27.2px;color:#333;">+1</div>
<div class="t" style="left:35.50px;top:122.44px;width:1200px;height:31.72px;line-height:31.72px;font-size:24.4px;color:#333;">清淡</div>
<div class="t" style="left:60.00px;top:121.52px;width:1200px;height:35.36px;line-height:35.36px;font-size:27.2px;color:#333;">+1</div>
<div class="t" style="left:84.50px;top:122.44px;width:1200px;height:31.72px;line-height:31.72px;font-size:24.4px;color:#333;">爽滑</div>
<div class="t" style="left:108.50px;top:121.52px;width:1200px;height:35.36px;line-height:35.36px;font-size:27.2px;color:#333;">+1</div>
<div class="t" style="left:132.50px;top:122.44px;width:1200px;height:31.72px;line-height:31.72px;font-size:24.4px;color:#333;">清淡</div>
<div class="t" style="left:156.50px;top:121.52px;width:1200px;height:35.36px;line-height:35.36px;font-size:27.2px;color:#333;">+1</div>
<div class="t" style="left:180.50px;top:122.44px;width:1200px;height:31.72px;line-height:31.72px;font-size:24.4px;color:#333;">爽滑</div>
<div class="t" style="left:-84.50px;top:147.44px;width:1200px;height:31.72px;line-height:31.72px;font-size:24.4px;color:#333;">热</div>
<div class="t" style="left:60.00px;top:147.44px;width:1200px;height:31.72px;line-height:31.72px;font-size:24.4px;color:#333;">冷</div>
<div class="t" style="left:84.50px;top:147.44px;width:1200px;height:31.72px;line-height:31.72px;font-size:24.4px;color:#333;">冷</div>
<div class="t" style="left:108.50px;top:147.44px;width:1200px;height:31.72px;line-height:31.72px;font-size:24.4px;color:#333;">冷</div>
<div class="t" style="left:156.50px;top:147.44px;width:1200px;height:31.72px;line-height:31.72px;font-size:24.4px;color:#333;">热</div>
<div class="t" style="left:180.50px;top:147.44px;width:1200px;height:31.72px;line-height:31.72px;font-size:24.4px;color:#333;">热</div>
<div class="t" style="left:-36.50px;top:172.44px;width:1200px;height:31.72px;line-height:31.72px;font-size:24.4px;color:#333;">-</div>
<div class="t" style="left:-12.50px;top:172.44px;width:1200px;height:31.72px;line-height:31.72px;font-size:24.4px;color:#333;">-</div>
<div class="t" style="left:11.50px;top:172.44px;width:1200px;height:31.72px;line-height:31.72px;font-size:24.4px;color:#333;">-</div>
<div class="t" style="left:84.50px;top:172.44px;width:1200px;height:31.72px;line-height:31.72px;font-size:24.4px;color:#333;">-</div>
<div class="t" style="left:-60.50px;top:197.44px;width:1200px;height:31.72px;line-height:31.72px;font-size:24.4px;color:#333;">+2</div>
<div class="t" style="left:132.50px;top:222.44px;width:1200px;height:31.72px;line-height:31.72px;font-size:24.4px;color:#333;">+1</div>
<div class="t" style="left:35.50px;top:247.44px;width:1200px;height:31.72px;line-height:31.72px;font-size:24.4px;color:#333;">-</div>
<div class="t" style="left:-84.50px;top:283.42px;width:1200px;height:32.76px;line-height:32.76px;font-size:25.2px;color:#2a6a2a;">2</div>
<div class="t" style="left:-60.50px;top:283.42px;width:1200px;height:32.76px;line-height:32.76px;font-size:25.2px;color:#6a6a20;">4</div>
<div class="t" style="left:-36.50px;top:283.42px;width:1200px;height:32.76px;line-height:32.76px;font-size:25.2px;color:#6a6a20;">4</div>
<div class="t" style="left:-12.50px;top:283.42px;width:1200px;height:32.76px;line-height:32.76px;font-size:25.2px;color:#6a6a20;">4</div>
<div class="t" style="left:11.50px;top:283.42px;width:1200px;height:32.76px;line-height:32.76px;font-size:25.2px;color:#2a6a2a;">2</div>
<div class="t" style="left:35.50px;top:283.42px;width:1200px;height:32.76px;line-height:32.76px;font-size:25.2px;color:#2a6a2a;">2</div>
<div class="t" style="left:60.00px;top:283.42px;width:1200px;height:32.76px;line-height:32.76px;font-size:25.2px;color:#6a6a20;">5</div>
<div class="t" style="left:84.50px;top:283.42px;width:1200px;height:32.76px;line-height:32.76px;font-size:25.2px;color:#6a6a20;">5</div>
<div class="t" style="left:108.50px;top:283.42px;width:1200px;height:32.76px;line-height:32.76px;font-size:25.2px;color:#2a6a2a;">2</div>
<div class="t" style="left:132.50px;top:283.42px;width:1200px;height:32.76px;line-height:32.76px;font-size:25.2px;color:#2a6a2a;">3</div>
<div class="t" style="left:156.50px;top:283.42px;width:1200px;height:32.76px;line-height:32.76px;font-size:25.2px;color:#2a6a2a;">2</div>
<div class="t" style="left:180.50px;top:283.42px;width:1200px;height:32.76px;line-height:32.76px;font-size:25.2px;color:#6a6a20;">4</div>
<div class="t" style="left:-36.50px;top:296.10px;width:1200px;height:65.00px;line-height:65.00px;font-size:50.0px;color:#e88f98;">是</div>
<div class="t" style="left:48.00px;top:311.40px;width:1200px;height:31.20px;line-height:31.20px;font-size:24.0px;color:#555;">流行度总和：</div>
<div class="t" style="left:132.50px;top:295.50px;width:1200px;height:65.00px;line-height:65.00px;font-size:50.0px;color:#cf9494;-webkit-text-stroke-width:0">39</div>
<div class="t" style="left:5.50px;top:332.73px;width:1200px;height:33.54px;line-height:33.54px;font-size:25.8px;color:#333;">参考数据来源日文wiki,英文wiki以及Taptap各大攻略</div>
<div class="t" style="left:5.00px;top:350.02px;width:1200px;height:40.56px;line-height:40.56px;font-size:31.2px;color:#333;">参考表格:(点击打开)</div>
<div class="a" style="left:417px;top:383px;width:376px;height:10px;background:#fddc8c;"></div>
<div class="tl" style="left:417.50px;top:369.15px;height:40.30px;line-height:40.30px;font-size:31.0px;color:#a05a1c;letter-spacing:0.8px">做出高流行蛋糕的秘诀在于平均分配每个月的流行点，因为流行度大于5的部分不显示</div>
<div class="a" style="left:0px;top:402px;width:800px;height:2px;background:#e6e6e6;"></div>
</body></html>
